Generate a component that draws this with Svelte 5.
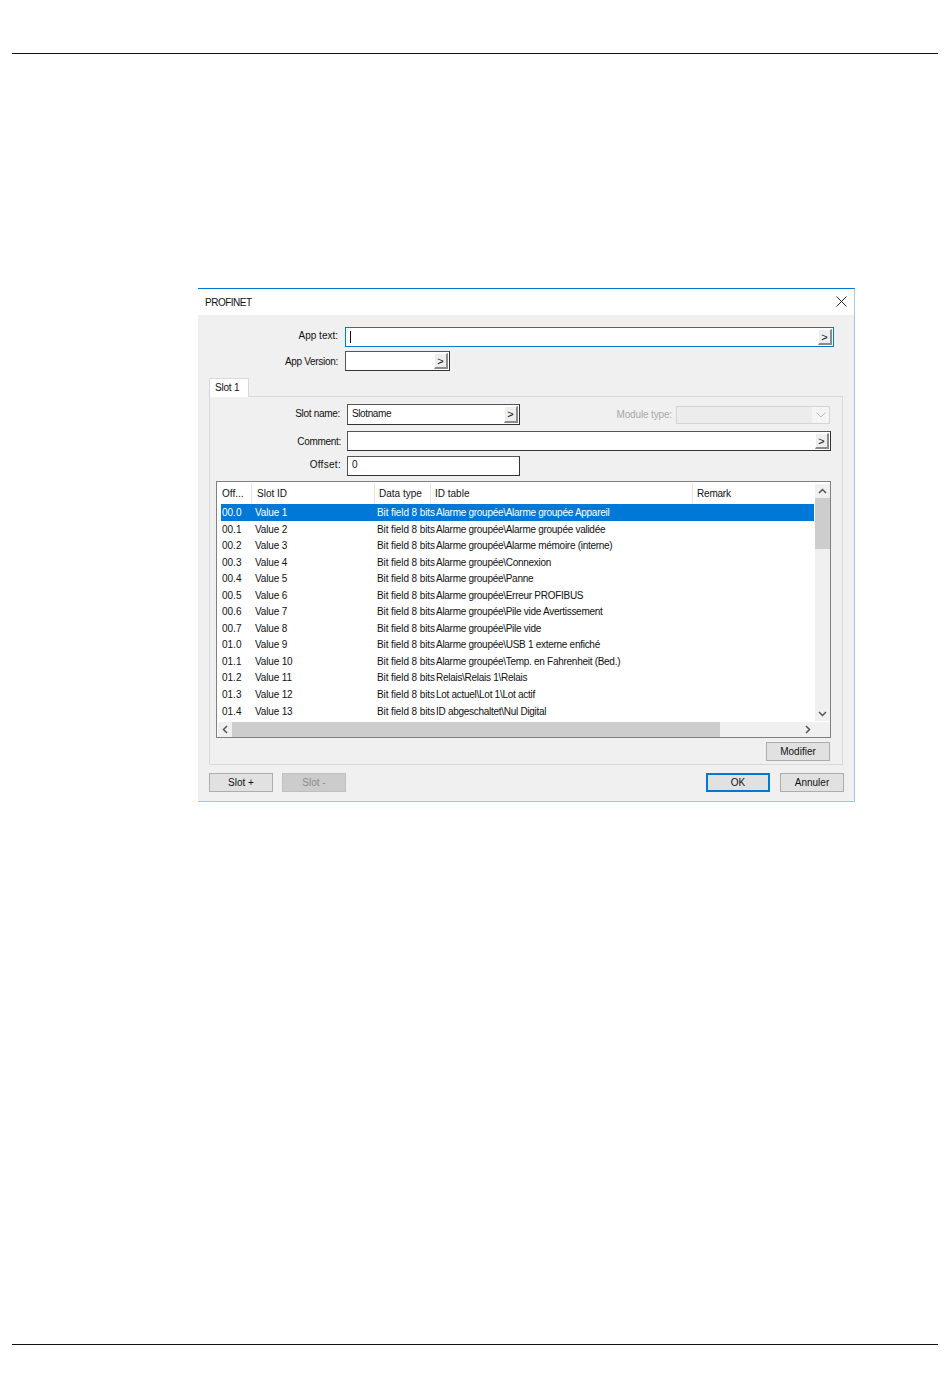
<script>
    // 一覧の行データ (offset, slot, data type, id table)
    const rows = [
        ['00.0', 'Value 1', 'Alarme groupée\\Alarme groupée Appareil'],
        ['00.1', 'Value 2', 'Alarme groupée\\Alarme groupée validée'],
        ['00.2', 'Value 3', 'Alarme groupée\\Alarme mémoire (interne)'],
        ['00.3', 'Value 4', 'Alarme groupée\\Connexion'],
        ['00.4', 'Value 5', 'Alarme groupée\\Panne'],
        ['00.5', 'Value 6', 'Alarme groupée\\Erreur PROFIBUS'],
        ['00.6', 'Value 7', 'Alarme groupée\\Pile vide Avertissement'],
        ['00.7', 'Value 8', 'Alarme groupée\\Pile vide'],
        ['01.0', 'Value 9', 'Alarme groupée\\USB 1 externe enfiché'],
        ['01.1', 'Value 10', 'Alarme groupée\\Temp. en Fahrenheit (Bed.)'],
        ['01.2', 'Value 11', 'Relais\\Relais 1\\Relais'],
        ['01.3', 'Value 12', 'Lot actuel\\Lot 1\\Lot actif'],
        ['01.4', 'Value 13', 'ID abgeschaltet\\Nul Digital'],
    ];
</script>

<div class="page">
    <div class="dialog">
        <div class="titlebar">
            <span class="title">PROFINET</span>
            <svg class="close" width="11" height="11" viewBox="0 0 11 11"><path d="M0.5 0.5 L10.5 10.5 M10.5 0.5 L0.5 10.5" stroke="#222" fill="none"/></svg>
        </div>
        <div class="body">
            <div class="app-row first">
                <label class="lbl nudge-3" for="app-text">App text:</label>
                <div class="input focus wide" id="app-text"><i class="caret"></i><button class="more">&gt;</button></div>
            </div>
            <div class="app-row">
                <label class="lbl tight" for="app-ver">App Version:</label>
                <div class="input short" id="app-ver"><button class="more">&gt;</button></div>
            </div>

            <div class="tab">Slot 1</div>
            <div class="panel">
                <div class="slot-row name-row">
                    <span class="lbl tight nudge-2">Slot name:</span>
                    <div class="input mid text-name">Slotname<button class="more">&gt;</button></div>
                    <span class="lbl-off">Module type:</span>
                    <div class="select">
                        <svg width="10" height="6" viewBox="0 0 10 6"><path d="M0.5 0.5 L5 5 L9.5 0.5" stroke="#bbb" fill="none"/></svg>
                    </div>
                </div>
                <div class="slot-row comment-row">
                    <span class="lbl tight out">Comment:</span>
                    <div class="input full"><button class="more">&gt;</button></div>
                </div>
                <div class="slot-row offset-row">
                    <span class="lbl out wide-lbl nudge-4">Offset:</span>
                    <div class="input mid text-offset">0</div>
                </div>

                <div class="list">
                    <div class="list-main">
                        <div class="head">
                            <span class="h-off">Off...</span>
                            <span class="h-slot">Slot ID</span>
                            <span class="h-type">Data type</span>
                            <span class="h-table">ID table</span>
                            <span class="h-remark">Remark</span>
                        </div>
                        {#each rows as row, i}
                            <div class="row" class:selected={i === 0}>
                                <span class="c-off">{row[0]}</span>
                                <span class="c-slot">{row[1]}</span>
                                <span class="c-type">Bit field 8 bits</span>
                                <span class="c-table">{row[2]}</span>
                            </div>
                        {/each}
                    </div>
                    <div class="vscroll">
                        <svg width="9" height="6" viewBox="0 0 9 6"><path d="M1 5 L4.5 1.5 L8 5" stroke="#555" stroke-width="1.5" fill="none"/></svg>
                        <div class="vthumb"></div>
                        <svg class="down" width="9" height="6" viewBox="0 0 9 6"><path d="M1 1 L4.5 4.5 L8 1" stroke="#555" stroke-width="1.5" fill="none"/></svg>
                    </div>
                    <div class="hscroll">
                        <svg width="6" height="9" viewBox="0 0 6 9"><path d="M5 1 L1.5 4.5 L5 8" stroke="#555" stroke-width="1.5" fill="none"/></svg>
                        <div class="hthumb"></div>
                        <svg class="right" width="6" height="9" viewBox="0 0 6 9"><path d="M1 1 L4.5 4.5 L1 8" stroke="#555" stroke-width="1.5" fill="none"/></svg>
                    </div>
                </div>

                <div class="modify"><button class="btn">Modifier</button></div>
            </div>

            <div class="footer">
                <button class="btn">Slot +</button>
                <button class="btn off">Slot -</button>
                <button class="btn ok">OK</button>
                <button class="btn">Annuler</button>
            </div>
        </div>
    </div>
    <div class="bottom-rule"></div>
</div>

<style>
    :global(body) {
        margin: 0;
        background: #fff;
    }
    .page {
        width: 950px;
        height: 1398px;
        box-sizing: border-box;
        padding-top: 53px;
        font-family: "Liberation Sans", Arial, sans-serif;
        font-size: 10px;
        color: #111;
    }
    .page::before {
        content: '';
        display: block;
        height: 1px;
        margin: 0 12px;
        background: #111;
    }
    .bottom-rule {
        height: 1px;
        margin: 542px 12px 0;
        background: #111;
    }
    .dialog {
        width: 657px;
        height: 514px;
        box-sizing: border-box;
        margin: 234px 0 0 198px;
        border: 1px solid #9fc6e4;
        border-left: 0;
        border-top-color: #0078d7;
        display: flex;
        flex-direction: column;
    }
    .titlebar {
        height: 26px;
        flex: none;
        display: flex;
        align-items: center;
        justify-content: space-between;
        padding: 0 7px 2px 7px;
        box-sizing: border-box;
        background: #fff;
    }
    .title {
        letter-spacing: -0.5px;
        padding-top: 2px;
    }
    .body {
        flex: 1;
        background: #f0f0f0;
        padding-left: 1px;
        position: relative;
    }
    .app-row {
        display: flex;
        align-items: center;
        gap: 7px;
        margin-top: 4px;
    }
    .app-row.first {
        margin-top: 12px;
    }
    .app-row .lbl {
        width: 139px;
    }
    .lbl {
        width: 130px;
        text-align: right;
        flex: none;
        box-sizing: border-box;
    }
    .tight {
        letter-spacing: -0.3px;
    }
    .out {
        width: 131px;
        margin-right: -1px;
    }
    .wide-lbl {
        letter-spacing: 0.3px;
    }
    .nudge-2 {
        padding-bottom: 2px;
    }
    .nudge-3 {
        padding-bottom: 3px;
    }
    .nudge-4 {
        padding-bottom: 4px;
    }
    .input {
        position: relative;
        box-sizing: border-box;
        height: 20px;
        flex: none;
        background: #fff;
        border: 1px solid #555;
        border-right-color: #333;
        border-bottom-color: #333;
        display: flex;
        align-items: center;
        padding-left: 4px;
    }
    .focus {
        border-color: #0078d7;
    }
    .wide {
        width: 489px;
    }
    .short {
        width: 105px;
    }
    .mid {
        width: 173px;
    }
    .full {
        width: 484px;
    }
    .text-name {
        padding-bottom: 2px;
        letter-spacing: -0.4px;
    }
    .text-offset {
        padding-bottom: 3px;
    }
    .caret {
        width: 1px;
        height: 12px;
        background: #111;
    }
    .more {
        position: absolute;
        right: 1px;
        top: 1px;
        bottom: 1px;
        width: 14px;
        padding: 0;
        box-sizing: border-box;
        border: 0;
        border-left: 1px solid #fff;
        border-top: 1px solid #fff;
        border-right: 2px solid #8c8c8c;
        border-bottom: 2px solid #8c8c8c;
        background: #eee;
        font: 11px "Liberation Sans", Arial, sans-serif;
        color: #111;
    }
    .tab {
        position: relative;
        z-index: 1;
        box-sizing: border-box;
        width: 40px;
        height: 19px;
        margin: 7px 0 -1px 10px;
        padding: 3px 0 0 5px;
        background: #fff;
        border: 1px solid #d9d9d9;
        border-bottom: 0;
        letter-spacing: -0.2px;
    }
    .panel {
        box-sizing: border-box;
        width: 634px;
        height: 369px;
        margin-left: 10px;
        border: 1px solid #d9d9d9;
    }
    .slot-row {
        display: flex;
        align-items: center;
        gap: 7px;
    }
    .name-row {
        margin-top: 7px;
    }
    .name-row .input {
        height: 21px;
    }
    .comment-row {
        margin-top: 6px;
    }
    .offset-row {
        margin-top: 5px;
    }
    .lbl-off {
        margin-left: auto;
        margin-right: -3px;
        color: #a8a8a8;
        letter-spacing: -0.15px;
    }
    .select {
        box-sizing: border-box;
        width: 154px;
        height: 18px;
        margin-right: 12px;
        display: flex;
        align-items: center;
        justify-content: flex-end;
        padding-right: 3px;
        background: linear-gradient(to right, #ececec 135px, #f5f5f5 135px);
        border: 1px solid #d4d4d4;
    }
    .list {
        position: relative;
        box-sizing: border-box;
        width: 615px;
        height: 257px;
        margin: 5px 0 0 6px;
        background: #fff;
        border: 1px solid #808080;
        padding: 1px 16px 16px 4px;
    }
    .head {
        height: 21px;
        display: flex;
        align-items: center;
        position: relative;
    }
    .head span {
        position: absolute;
        top: 0;
        bottom: 0;
        line-height: 21px;
        padding-left: 4px;
        box-sizing: border-box;
        border-right: 1px solid #e5e5e5;
    }
    .h-off { left: -3px; width: 34px; }
    .h-slot { left: 31px; width: 123px; padding-left: 5px !important; }
    .h-type { left: 154px; width: 56px; }
    .h-table { left: 210px; width: 262px; }
    .h-remark { left: 472px; width: 122px; border-right: 0 !important; letter-spacing: -0.2px; }
    .row {
        height: 16.55px;
        line-height: 18.6px;
        display: flex;
        white-space: nowrap;
    }
    .row.selected {
        background: #0078d7;
        color: #fff;
    }
    .row span {
        flex: none;
    }
    .c-off {
        width: 34px;
        padding-left: 1px;
        box-sizing: border-box;
    }
    .c-slot {
        width: 122px;
        letter-spacing: -0.15px;
    }
    .c-type {
        width: 59px;
        letter-spacing: -0.1px;
    }
    .c-table {
        letter-spacing: -0.28px;
    }
    .vscroll {
        position: absolute;
        top: 2px;
        right: 0;
        bottom: 16px;
        width: 15px;
        background: #f0f0f0;
        display: flex;
        flex-direction: column;
        align-items: center;
        padding-top: 4px;
        box-sizing: border-box;
    }
    .vthumb {
        width: 100%;
        height: 51px;
        margin-top: 4px;
        background: #cdcdcd;
    }
    .vscroll .down {
        margin-top: auto;
        margin-bottom: 4px;
    }
    .hscroll {
        position: absolute;
        left: 1px;
        right: 0;
        bottom: 0;
        height: 15px;
        background: #f0f0f0;
        display: flex;
        align-items: center;
        padding: 0 19px 0 4px;
        box-sizing: border-box;
    }
    .hthumb {
        width: 488px;
        height: 100%;
        margin-left: 4px;
        background: #cdcdcd;
    }
    .hscroll .right {
        margin-left: auto;
    }
    .modify {
        display: flex;
        justify-content: flex-end;
        margin: 4px 12px 0 0;
    }
    .btn {
        box-sizing: border-box;
        width: 64px;
        height: 19px;
        padding: 0;
        background: #e1e1e1;
        border: 1px solid #adadad;
        font: 10px "Liberation Sans", Arial, sans-serif;
        color: #111;
    }
    .btn.off {
        background: #ccc;
        border-color: #bfbfbf;
        color: #8a8a8a;
    }
    .btn.ok {
        margin-left: auto;
        border: 2px solid #0078d7;
    }
    .footer {
        display: flex;
        gap: 9px;
        margin: 8px 10px 0;
    }
    .footer .btn.ok + .btn {
        margin-left: 1px;
    }
    .close {
        display: block;
    }
</style>
